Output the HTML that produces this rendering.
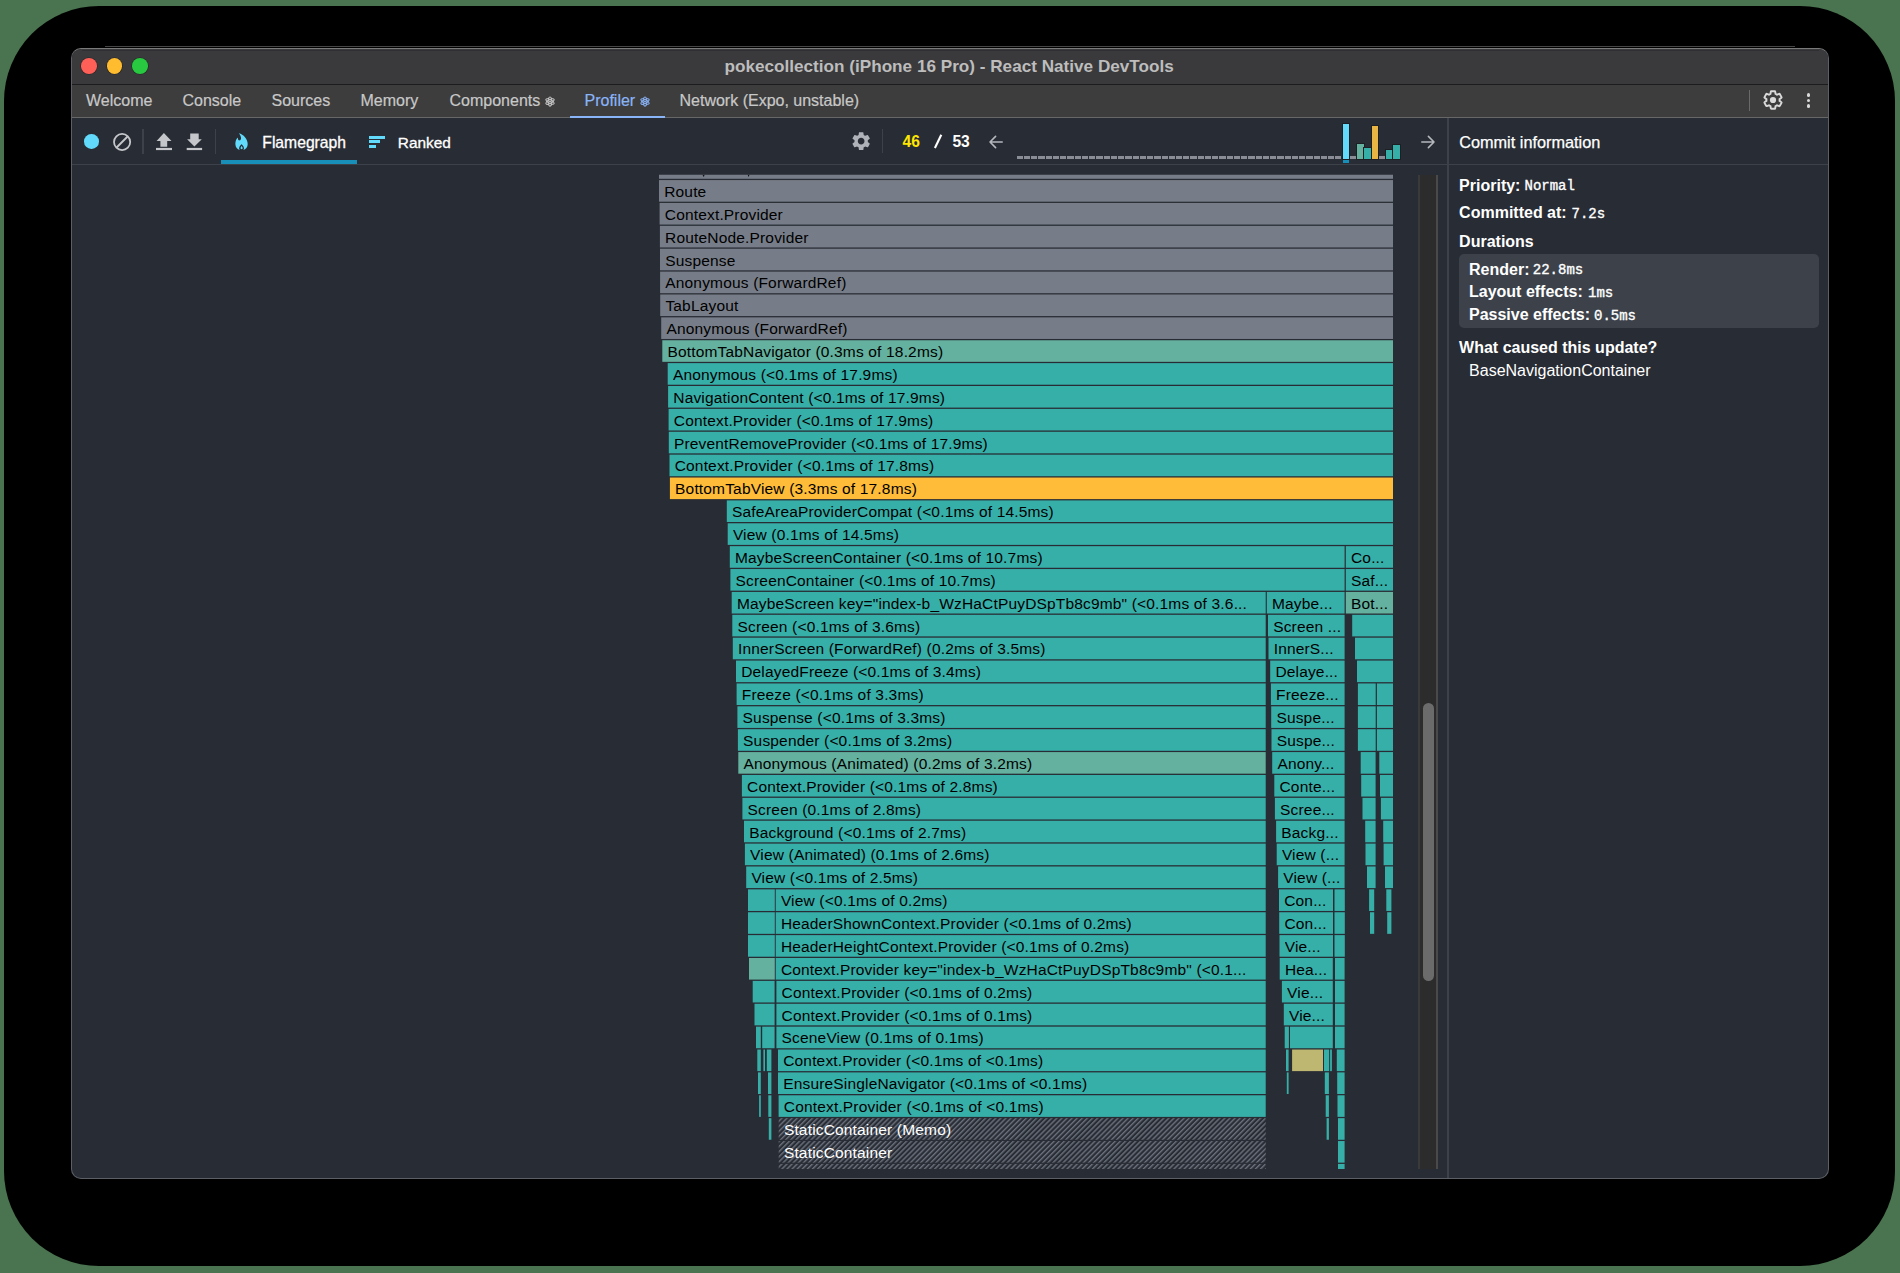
<!DOCTYPE html>
<html><head><meta charset="utf-8">
<style>
*{box-sizing:border-box;margin:0;padding:0}
html,body{width:1900px;height:1273px;overflow:hidden;background:#49744f;font-family:"Liberation Sans",sans-serif}
body{position:relative}
.a{position:absolute}
#shadow{position:absolute;left:4px;top:6px;width:1891px;height:1260px;border-radius:95px;background:#000}
#win{position:absolute;left:71px;top:48px;width:1758px;height:1131px;border-radius:10px;overflow:hidden;background:#282c34;border:1px solid #5c5f66;border-top-color:#7a7a7a}
.tl{position:absolute;top:58.2px;width:15.6px;height:15.6px;border-radius:50%;box-shadow:0 0 0 0.6px rgba(0,0,0,0.35)}
.t{position:absolute;white-space:nowrap;line-height:1}
.tab{position:absolute;top:92.8px;font-size:16px;color:#c8c8c8;white-space:nowrap;line-height:1;-webkit-text-stroke:0.2px currentColor}
.mono{font-family:"Liberation Mono",monospace}
#fg{position:absolute;left:0;top:0;width:1900px;height:1273px;clip-path:inset(174.7px 453px 104.1px 72px)}
.b{position:absolute;height:21.6px;overflow:hidden;color:#000;font-size:15.5px;letter-spacing:0.17px;line-height:21.6px;padding-left:5.2px;white-space:nowrap;padding-top:0.8px}
.b span{display:block;overflow:hidden}
.h{color:#fff}
</style></head><body>
<div id="shadow"></div>
<div id="win"></div>
<!-- title bar -->
<div class="a" style="left:72px;top:49px;width:1756px;height:35.5px;background:#3a3a3c;border-radius:9px 9px 0 0"></div>
<div class="a" style="left:105px;top:45.8px;width:1690px;height:1px;background:#454545"></div>
<div class="a" style="left:82px;top:50px;width:1737px;height:1px;background:#303034"></div>
<div class="a" style="left:72px;top:84px;width:1756px;height:1px;background:#1c1c1e"></div>
<div class="tl" style="left:81.4px;background:#fe5f57"></div>
<div class="tl" style="left:106.6px;background:#febc2e"></div>
<div class="tl" style="left:132.1px;background:#28c840"></div>
<div class="t" style="left:724.5px;top:57.6px;font-size:17.15px;font-weight:bold;color:#bdbdbd">pokecollection (iPhone 16 Pro) - React Native DevTools</div>
<!-- tabs -->
<div class="a" style="left:72px;top:85px;width:1756px;height:32.5px;background:#3d3d3d"></div>
<div class="a" style="left:72px;top:117px;width:1756px;height:1px;background:#676767"></div>
<div class="tab" style="left:86px">Welcome</div>
<div class="tab" style="left:182.5px">Console</div>
<div class="tab" style="left:271.5px">Sources</div>
<div class="tab" style="left:360.5px">Memory</div>
<div class="tab" style="left:449.5px">Components</div>
<div class="tab" style="left:584.5px;color:#8ab4f8">Profiler</div>
<div class="tab" style="left:679.5px">Network (Expo, unstable)</div>
<svg class="a" style="left:544.5px;top:95.6px" width="10" height="11" viewBox="0 0 10 11"><g fill="none" stroke="#c8c8c8" stroke-width="1.05"><ellipse cx="5" cy="5.5" rx="1.9" ry="4.6"/><ellipse cx="5" cy="5.5" rx="1.9" ry="4.6" transform="rotate(60 5 5.5)"/><ellipse cx="5" cy="5.5" rx="1.9" ry="4.6" transform="rotate(120 5 5.5)"/></g><circle cx="5" cy="5.5" r="1" fill="#c8c8c8"/></svg>
<svg class="a" style="left:640px;top:95.6px" width="10" height="11" viewBox="0 0 10 11"><g fill="none" stroke="#8ab4f8" stroke-width="1.05"><ellipse cx="5" cy="5.5" rx="1.9" ry="4.6"/><ellipse cx="5" cy="5.5" rx="1.9" ry="4.6" transform="rotate(60 5 5.5)"/><ellipse cx="5" cy="5.5" rx="1.9" ry="4.6" transform="rotate(120 5 5.5)"/></g><circle cx="5" cy="5.5" r="1" fill="#8ab4f8"/></svg>
<div class="a" style="left:1748.80px;top:90.30px;width:1.20px;height:20.30px;background:#6a6a6a;"></div>
<svg class="a" style="left:1761.7px;top:89.2px" width="22" height="22" viewBox="0 0 24 24"><path fill="none" stroke="#dadada" stroke-width="2.1" d="M19.14 12.94c.04-.3.06-.61.06-.94 0-.32-.02-.64-.07-.94l2.03-1.58a.49.49 0 0 0 .12-.61l-1.92-3.32a.488.488 0 0 0-.59-.22l-2.39.96c-.5-.38-1.030-.7-1.62-.94l-.36-2.54a.484.484 0 0 0-.48-.41h-3.840c-.24 0-.43.17-.47.41l-.36 2.54c-.59.24-1.13.57-1.62.94l-2.39-.96c-.22-.08-.47 0-.59.22L2.74 8.87c-.12.21-.08.47.12.61l2.03 1.58c-.05.3-.09.63-.09.94s.02.64.07.94l-2.03 1.58a.49.49 0 0 0-.12.61l1.92 3.32c.12.22.37.29.59.22l2.39-.96c.5.38 1.03.7 1.62.94l.36 2.54c.05.24.24.41.48.41h3.84c.24 0 .44-.17.47-.41l.36-2.54c.59-.24 1.13-.56 1.62-.94l2.39.96c.22.08.47 0 .59-.22l1.92-3.32c.12-.22.07-.47-.12-.61l-2.01-1.58z"/><circle cx="12" cy="12" r="3.4" fill="#dadada"/></svg>
<div class="a" style="left:1806.55px;top:92.85px;width:3.90px;height:3.90px;background:#dadada;border-radius:50%"></div>
<div class="a" style="left:1806.55px;top:98.55px;width:3.90px;height:3.90px;background:#dadada;border-radius:50%"></div>
<div class="a" style="left:1806.55px;top:104.15px;width:3.90px;height:3.90px;background:#dadada;border-radius:50%"></div>
<div class="a" style="left:569.5px;top:115.5px;width:95.5px;height:2px;background:#8ab4f8"></div>
<div class="a" style="left:84.20px;top:134.10px;width:14.60px;height:14.60px;background:#61dafb;border-radius:50%"></div>
<svg class="a" style="left:112px;top:131.5px" width="20" height="20" viewBox="0 0 20 20"><circle cx="10.1" cy="10" r="8.1" fill="none" stroke="#c4c6ca" stroke-width="1.8"/><line x1="4.6" y1="15.5" x2="15.6" y2="4.5" stroke="#c4c6ca" stroke-width="1.8"/></svg>
<div class="a" style="left:142.40px;top:129.00px;width:1.20px;height:25.00px;background:#3d424a;"></div>
<svg class="a" style="left:154px;top:130px" width="20" height="22" viewBox="0 0 20 22"><path d="M9.9 3.05 L17.5 10.9 L13.2 10.9 L13.2 16.8 L6.4 16.8 L6.4 10.9 L2.6 10.9 Z" fill="#c4c6ca"/><rect x="2" y="17.9" width="16" height="2.2" fill="#c4c6ca"/></svg>
<svg class="a" style="left:184px;top:130px" width="20" height="22" viewBox="0 0 20 22"><path d="M6.2 3.4 L14.7 3.4 L14.7 9.3 L17.8 9.3 L10.4 16.5 L3.1 9.3 L6.2 9.3 Z" fill="#c4c6ca"/><rect x="2.7" y="17.9" width="15.4" height="2.2" fill="#c4c6ca"/></svg>
<div class="a" style="left:214.90px;top:129.00px;width:1.20px;height:25.00px;background:#3d424a;"></div>
<svg class="a" style="left:230.9px;top:131.0px" width="21.1" height="21.1" viewBox="0 0 24 24"><path fill="#61dafb" d="M10.0650893,21.5040462 C7.14020814,20.6850349 5,18.0558698 5,14.9390244 C5,14.017627 5,9.81707317 7.83333333,7.37804878 C7.83333333,7.37804878 7.58333333,11.199187 10,10.6300813 C11.125,10.326087 13.0062497,7.63043487 8.91666667,2.5 C14.1666667,3.58536585 19,9.32926829 19,14.9390244 C19,18.0558698 16.8597919,20.6850349 13.9349107,21.5040462 C14.454663,21.0118505 14.7765152,20.3233394 14.7765152,19.5613412 C14.7765152,17.2826087 12,15.0875871 12,15.0875871 C12,15.0875871 9.22348485,17.2826087 9.22348485,19.5613412 C9.22348485,20.3233394 9.54533705,21.0118505 10.0650893,21.5040462 Z M12.0833333,20.6514763 C11.3814715,20.6514763 10.8125,20.1226027 10.8125,19.4702042 C10.8125,18.6069669 12.0833333,17.1347829 12.0833333,17.1347829 C12.0833333,17.1347829 13.3541667,18.6069669 13.3541667,19.4702042 C13.3541667,20.1226027 12.7851952,20.6514763 12.0833333,20.6514763 Z"/></svg>
<div class="t" style="left:262.3px;top:135.06px;font-size:15.7px;color:#fff;-webkit-text-stroke:0.3px #fff;">Flamegraph</div>
<div class="a" style="left:221.00px;top:160.00px;width:136.00px;height:4.00px;background:#178fb9;"></div>
<div class="a" style="left:368.80px;top:135.70px;width:16.00px;height:2.90px;background:#61dafb;"></div>
<div class="a" style="left:368.80px;top:140.40px;width:11.40px;height:2.90px;background:#61dafb;"></div>
<div class="a" style="left:368.80px;top:145.00px;width:7.20px;height:3.00px;background:#61dafb;"></div>
<div class="t" style="left:397.8px;top:135.31px;font-size:15.4px;color:#fff;-webkit-text-stroke:0.3px #fff;">Ranked</div>
<svg class="a" style="left:850.45px;top:130.05px" width="22.3" height="22.3" viewBox="0 0 24 24"><path fill="#afb3b9" fill-rule="evenodd" d="M19.14 12.94c.04-.3.06-.61.06-.94 0-.32-.02-.64-.07-.94l2.03-1.58a.49.49 0 0 0 .12-.61l-1.92-3.32a.488.488 0 0 0-.59-.22l-2.39.96c-.5-.38-1.03-.7-1.62-.94l-.36-2.54a.484.484 0 0 0-.48-.41h-3.84c-.24 0-.43.17-.47.41l-.36 2.54c-.59.24-1.13.57-1.62.94l-2.39-.96c-.22-.08-.47 0-.59.22L2.74 8.87c-.12.21-.08.47.12.61l2.03 1.58c-.05.3-.09.63-.09.94s.02.64.07.94l-2.03 1.58a.49.49 0 0 0-.12.61l1.92 3.32c.12.22.37.29.59.22l2.39-.96c.5.38 1.03.7 1.62.94l.36 2.54c.05.24.24.41.48.41h3.84c.24 0 .44-.17.47-.41l.36-2.54c.59-.24 1.13-.56 1.62-.94l2.39.96c.22.08.47 0 .59-.22l1.92-3.32c.12-.22.07-.47-.12-.61l-2.01-1.58zM12 15.6c-1.98 0-3.6-1.62-3.6-3.6s1.62-3.6 3.6-3.6 3.6 1.62 3.6 3.6-1.62 3.6-3.6 3.6z"/></svg>
<div class="a" style="left:882.20px;top:129.30px;width:1.20px;height:24.10px;background:#3d424a;"></div>
<div class="t" style="left:902.6px;top:133.94px;font-size:15.6px;color:#ffe600;font-weight:bold;">46</div>
<svg class="a" style="left:932px;top:132px" width="12" height="18" viewBox="0 0 12 18"><line x1="2.9" y1="16" x2="9.3" y2="2.8" stroke="#fff" stroke-width="2.1" stroke-linecap="butt"/></svg>
<div class="t" style="left:952.4px;top:133.94px;font-size:15.6px;color:#fff;font-weight:bold;">53</div>
<svg class="a" style="left:987px;top:133px" width="18" height="18" viewBox="0 0 18 18"><path d="M15.2 9 H3 M8.6 3.4 L3 9 L8.6 14.6" fill="none" stroke="#b4b7bc" stroke-width="1.6" stroke-linecap="round" stroke-linejoin="round"/></svg>
<svg class="a" style="left:1418.5px;top:132.7px" width="18" height="18" viewBox="0 0 18 18"><path d="M2.8 9 H15 M9.4 3.4 L15 9 L9.4 14.6" fill="none" stroke="#b4b7bc" stroke-width="1.6" stroke-linecap="round" stroke-linejoin="round"/></svg>
<div class="a" style="left:1017.00px;top:155.60px;width:6.00px;height:3.60px;background:#8a8d95;"></div>
<div class="a" style="left:1024.00px;top:155.60px;width:6.00px;height:3.60px;background:#8a8d95;"></div>
<div class="a" style="left:1031.00px;top:155.60px;width:6.00px;height:3.60px;background:#8a8d95;"></div>
<div class="a" style="left:1038.00px;top:155.60px;width:7.00px;height:3.60px;background:#8a8d95;"></div>
<div class="a" style="left:1046.00px;top:155.60px;width:6.00px;height:3.60px;background:#8a8d95;"></div>
<div class="a" style="left:1053.00px;top:155.60px;width:6.00px;height:3.60px;background:#8a8d95;"></div>
<div class="a" style="left:1060.00px;top:155.60px;width:6.00px;height:3.60px;background:#8a8d95;"></div>
<div class="a" style="left:1067.00px;top:155.60px;width:7.00px;height:3.60px;background:#8a8d95;"></div>
<div class="a" style="left:1075.00px;top:155.60px;width:6.00px;height:3.60px;background:#8a8d95;"></div>
<div class="a" style="left:1082.00px;top:155.60px;width:6.00px;height:3.60px;background:#8a8d95;"></div>
<div class="a" style="left:1089.00px;top:155.60px;width:6.00px;height:3.60px;background:#8a8d95;"></div>
<div class="a" style="left:1096.00px;top:155.60px;width:7.00px;height:3.60px;background:#8a8d95;"></div>
<div class="a" style="left:1104.00px;top:155.60px;width:6.00px;height:3.60px;background:#8a8d95;"></div>
<div class="a" style="left:1111.00px;top:155.60px;width:6.00px;height:3.60px;background:#8a8d95;"></div>
<div class="a" style="left:1118.00px;top:155.60px;width:6.00px;height:3.60px;background:#8a8d95;"></div>
<div class="a" style="left:1125.00px;top:155.60px;width:7.00px;height:3.60px;background:#8a8d95;"></div>
<div class="a" style="left:1133.00px;top:155.60px;width:6.00px;height:3.60px;background:#8a8d95;"></div>
<div class="a" style="left:1140.00px;top:155.60px;width:6.00px;height:3.60px;background:#8a8d95;"></div>
<div class="a" style="left:1147.00px;top:155.60px;width:6.00px;height:3.60px;background:#8a8d95;"></div>
<div class="a" style="left:1154.00px;top:155.60px;width:7.00px;height:3.60px;background:#8a8d95;"></div>
<div class="a" style="left:1162.00px;top:155.60px;width:6.00px;height:3.60px;background:#8a8d95;"></div>
<div class="a" style="left:1169.00px;top:155.60px;width:6.00px;height:3.60px;background:#8a8d95;"></div>
<div class="a" style="left:1176.00px;top:155.60px;width:6.00px;height:3.60px;background:#8a8d95;"></div>
<div class="a" style="left:1183.00px;top:155.60px;width:6.00px;height:3.60px;background:#8a8d95;"></div>
<div class="a" style="left:1190.00px;top:155.60px;width:7.00px;height:3.60px;background:#8a8d95;"></div>
<div class="a" style="left:1198.00px;top:155.60px;width:6.00px;height:3.60px;background:#8a8d95;"></div>
<div class="a" style="left:1205.00px;top:155.60px;width:6.00px;height:3.60px;background:#8a8d95;"></div>
<div class="a" style="left:1212.00px;top:155.60px;width:6.00px;height:3.60px;background:#8a8d95;"></div>
<div class="a" style="left:1219.00px;top:155.60px;width:7.00px;height:3.60px;background:#8a8d95;"></div>
<div class="a" style="left:1227.00px;top:155.60px;width:6.00px;height:3.60px;background:#8a8d95;"></div>
<div class="a" style="left:1234.00px;top:155.60px;width:6.00px;height:3.60px;background:#8a8d95;"></div>
<div class="a" style="left:1241.00px;top:155.60px;width:6.00px;height:3.60px;background:#8a8d95;"></div>
<div class="a" style="left:1248.00px;top:155.60px;width:7.00px;height:3.60px;background:#8a8d95;"></div>
<div class="a" style="left:1256.00px;top:155.60px;width:6.00px;height:3.60px;background:#8a8d95;"></div>
<div class="a" style="left:1263.00px;top:155.60px;width:6.00px;height:3.60px;background:#8a8d95;"></div>
<div class="a" style="left:1270.00px;top:155.60px;width:6.00px;height:3.60px;background:#8a8d95;"></div>
<div class="a" style="left:1277.00px;top:155.60px;width:7.00px;height:3.60px;background:#8a8d95;"></div>
<div class="a" style="left:1285.00px;top:155.60px;width:6.00px;height:3.60px;background:#8a8d95;"></div>
<div class="a" style="left:1292.00px;top:155.60px;width:6.00px;height:3.60px;background:#8a8d95;"></div>
<div class="a" style="left:1299.00px;top:155.60px;width:6.00px;height:3.60px;background:#8a8d95;"></div>
<div class="a" style="left:1306.00px;top:155.60px;width:7.00px;height:3.60px;background:#8a8d95;"></div>
<div class="a" style="left:1314.00px;top:155.60px;width:6.00px;height:3.60px;background:#8a8d95;"></div>
<div class="a" style="left:1321.00px;top:155.60px;width:6.00px;height:3.60px;background:#8a8d95;"></div>
<div class="a" style="left:1328.00px;top:155.60px;width:6.00px;height:3.60px;background:#8a8d95;"></div>
<div class="a" style="left:1335.00px;top:155.60px;width:6.00px;height:3.60px;background:#8a8d95;"></div>
<div class="a" style="left:1342.00px;top:155.60px;width:7.00px;height:3.60px;background:#8a8d95;"></div>
<div class="a" style="left:1350.00px;top:155.60px;width:6.00px;height:3.60px;background:#8a8d95;"></div>
<div class="a" style="left:1357.00px;top:155.60px;width:6.00px;height:3.60px;background:#8a8d95;"></div>
<div class="a" style="left:1364.00px;top:155.60px;width:6.00px;height:3.60px;background:#8a8d95;"></div>
<div class="a" style="left:1371.00px;top:155.60px;width:7.00px;height:3.60px;background:#8a8d95;"></div>
<div class="a" style="left:1379.00px;top:155.60px;width:6.00px;height:3.60px;background:#8a8d95;"></div>
<div class="a" style="left:1386.00px;top:155.60px;width:6.00px;height:3.60px;background:#8a8d95;"></div>
<div class="a" style="left:1393.00px;top:155.60px;width:6.00px;height:3.60px;background:#8a8d95;"></div>
<div class="a" style="left:1342.70px;top:123.60px;width:6.54px;height:35.30px;background:#61dafb;outline:0.7px solid #1d1f25"></div>
<div class="a" style="left:1342.70px;top:159.80px;width:6.54px;height:3.70px;background:#178fb9;"></div>
<div class="a" style="left:1357.18px;top:144.00px;width:6.54px;height:15.00px;background:#63b19e;outline:0.7px solid #1d1f25"></div>
<div class="a" style="left:1364.42px;top:147.60px;width:6.54px;height:11.40px;background:#37afa9;outline:0.7px solid #1d1f25"></div>
<div class="a" style="left:1371.66px;top:125.70px;width:6.54px;height:33.30px;background:#e8b443;outline:0.7px solid #1d1f25"></div>
<div class="a" style="left:1386.14px;top:150.30px;width:6.54px;height:8.70px;background:#37afa9;outline:0.7px solid #1d1f25"></div>
<div class="a" style="left:1393.38px;top:144.50px;width:6.54px;height:14.50px;background:#37afa9;outline:0.7px solid #1d1f25"></div>
<div class="a" style="left:72px;top:164px;width:1756px;height:1px;background:#3d424a"></div>
<div class="a" style="left:1447.1px;top:118px;width:1.9px;height:1060px;background:#3d424a"></div>
<div class="t" style="left:1459.2px;top:134.05px;font-size:16.3px;color:#fff;-webkit-text-stroke:0.25px #fff;">Commit information</div>
<div class="t" style="left:1459.1px;top:177.60px;font-size:16px;color:#fff;font-weight:bold;">Priority:</div>
<div class="t" style="left:1524.5px;top:179.36px;font-size:14px;color:#fff;font-family:'Liberation Mono',monospace;-webkit-text-stroke:0.35px currentColor;">Normal</div>
<div class="t" style="left:1459.1px;top:205.40px;font-size:16px;color:#fff;font-weight:bold;">Committed at:</div>
<div class="t" style="left:1571.5px;top:207.16px;font-size:14px;color:#fff;font-family:'Liberation Mono',monospace;-webkit-text-stroke:0.35px currentColor;">7.2s</div>
<div class="t" style="left:1459.1px;top:233.60px;font-size:16px;color:#fff;font-weight:bold;">Durations</div>
<div class="a" style="left:1459.00px;top:254.00px;width:359.70px;height:73.70px;background:#3d424a;border-radius:5px"></div>
<div class="t" style="left:1469.0px;top:261.60px;font-size:16px;color:#fff;font-weight:bold;">Render:</div>
<div class="t" style="left:1532.8px;top:263.36px;font-size:14px;color:#fff;font-family:'Liberation Mono',monospace;-webkit-text-stroke:0.35px currentColor;">22.8ms</div>
<div class="t" style="left:1469.0px;top:284.30px;font-size:16px;color:#fff;font-weight:bold;">Layout effects:</div>
<div class="t" style="left:1588.0px;top:286.06px;font-size:14px;color:#fff;font-family:'Liberation Mono',monospace;-webkit-text-stroke:0.35px currentColor;">1ms</div>
<div class="t" style="left:1469.0px;top:307.20px;font-size:16px;color:#fff;font-weight:bold;">Passive effects:</div>
<div class="t" style="left:1594.0px;top:308.96px;font-size:14px;color:#fff;font-family:'Liberation Mono',monospace;-webkit-text-stroke:0.35px currentColor;">0.5ms</div>
<div class="t" style="left:1459.1px;top:340.40px;font-size:16px;color:#fff;font-weight:bold;">What caused this update?</div>
<div class="t" style="left:1469.1px;top:362.60px;font-size:16px;color:#fff;">BaseNavigationContainer</div>
<div class="a" style="left:1417.90px;top:174.80px;width:20.10px;height:994.10px;background:#2c2c2c;"></div>
<div class="a" style="left:1417.90px;top:174.80px;width:2.20px;height:994.10px;background:#3a3a3a;"></div>
<div class="a" style="left:1436.10px;top:174.80px;width:1.90px;height:994.10px;background:#4a4a4a;"></div>
<div class="a" style="left:1423.00px;top:703.40px;width:11.00px;height:278.10px;background:#6b6b6b;border-radius:5.5px"></div>
<div id="fg">
<svg class="a" style="left:0;top:0" width="1900" height="1273"><defs><pattern id="hp" patternUnits="userSpaceOnUse" width="3.6" height="3.6" patternTransform="rotate(45)"><rect width="3.6" height="3.6" fill="#282c34"/><rect x="0" y="0" width="1.4" height="3.6" fill="#6c727d"/></pattern></defs><rect x="659.00" y="157.20" width="734.00" height="21.6" fill="#777d88"/><rect x="659.00" y="180.08" width="734.00" height="21.6" fill="#777d88"/><rect x="659.60" y="202.96" width="733.40" height="21.6" fill="#777d88"/><rect x="659.90" y="225.84" width="733.10" height="21.6" fill="#777d88"/><rect x="660.00" y="248.72" width="733.00" height="21.6" fill="#777d88"/><rect x="660.10" y="271.60" width="732.90" height="21.6" fill="#777d88"/><rect x="660.20" y="294.48" width="732.80" height="21.6" fill="#777d88"/><rect x="661.20" y="317.36" width="731.80" height="21.6" fill="#777d88"/><rect x="662.30" y="340.24" width="730.70" height="21.6" fill="#63b19e"/><rect x="667.70" y="363.12" width="725.30" height="21.6" fill="#37afa9"/><rect x="668.10" y="386.00" width="724.90" height="21.6" fill="#37afa9"/><rect x="668.60" y="408.88" width="724.40" height="21.6" fill="#37afa9"/><rect x="668.80" y="431.76" width="724.20" height="21.6" fill="#37afa9"/><rect x="669.50" y="454.64" width="723.50" height="21.6" fill="#37afa9"/><rect x="669.90" y="477.52" width="723.10" height="21.6" fill="#febc38"/><rect x="726.80" y="500.40" width="666.20" height="21.6" fill="#37afa9"/><rect x="727.70" y="523.28" width="665.30" height="21.6" fill="#37afa9"/><rect x="729.80" y="546.16" width="614.80" height="21.6" fill="#37afa9"/><rect x="1345.80" y="546.16" width="47.20" height="21.6" fill="#37afa9"/><rect x="730.40" y="569.04" width="614.20" height="21.6" fill="#37afa9"/><rect x="1345.80" y="569.04" width="47.20" height="21.6" fill="#37afa9"/><rect x="731.70" y="591.92" width="534.00" height="21.6" fill="#37afa9"/><rect x="1266.80" y="591.92" width="77.80" height="21.6" fill="#37afa9"/><rect x="1345.80" y="591.92" width="47.20" height="21.6" fill="#63b19e"/><rect x="732.30" y="614.80" width="533.40" height="21.6" fill="#37afa9"/><rect x="1268.00" y="614.80" width="76.60" height="21.6" fill="#37afa9"/><rect x="1352.20" y="614.80" width="40.80" height="21.6" fill="#37afa9"/><rect x="732.80" y="637.68" width="532.90" height="21.6" fill="#37afa9"/><rect x="1268.50" y="637.68" width="76.10" height="21.6" fill="#37afa9"/><rect x="1355.00" y="637.68" width="38.00" height="21.6" fill="#37afa9"/><rect x="736.00" y="660.56" width="529.70" height="21.6" fill="#37afa9"/><rect x="1270.20" y="660.56" width="74.40" height="21.6" fill="#37afa9"/><rect x="1357.00" y="660.56" width="36.00" height="21.6" fill="#37afa9"/><rect x="736.60" y="683.44" width="529.10" height="21.6" fill="#37afa9"/><rect x="1270.90" y="683.44" width="73.70" height="21.6" fill="#37afa9"/><rect x="1357.90" y="683.44" width="17.80" height="21.6" fill="#37afa9"/><rect x="1376.90" y="683.44" width="16.10" height="21.6" fill="#37afa9"/><rect x="737.40" y="706.32" width="528.30" height="21.6" fill="#37afa9"/><rect x="1271.20" y="706.32" width="73.40" height="21.6" fill="#37afa9"/><rect x="1357.90" y="706.32" width="17.80" height="21.6" fill="#37afa9"/><rect x="1376.90" y="706.32" width="16.10" height="21.6" fill="#37afa9"/><rect x="737.90" y="729.20" width="527.80" height="21.6" fill="#37afa9"/><rect x="1271.50" y="729.20" width="73.10" height="21.6" fill="#37afa9"/><rect x="1357.90" y="729.20" width="17.80" height="21.6" fill="#37afa9"/><rect x="1376.90" y="729.20" width="16.10" height="21.6" fill="#37afa9"/><rect x="738.30" y="752.08" width="527.40" height="21.6" fill="#63b19e"/><rect x="1272.20" y="752.08" width="72.40" height="21.6" fill="#37afa9"/><rect x="1360.70" y="752.08" width="14.90" height="21.6" fill="#37afa9"/><rect x="1379.30" y="752.08" width="13.70" height="21.6" fill="#37afa9"/><rect x="741.90" y="774.96" width="523.80" height="21.6" fill="#37afa9"/><rect x="1274.30" y="774.96" width="70.30" height="21.6" fill="#37afa9"/><rect x="1361.20" y="774.96" width="14.40" height="21.6" fill="#37afa9"/><rect x="1380.00" y="774.96" width="13.00" height="21.6" fill="#37afa9"/><rect x="742.40" y="797.84" width="523.30" height="21.6" fill="#37afa9"/><rect x="1274.90" y="797.84" width="69.70" height="21.6" fill="#37afa9"/><rect x="1362.50" y="797.84" width="13.10" height="21.6" fill="#37afa9"/><rect x="1380.90" y="797.84" width="12.10" height="21.6" fill="#37afa9"/><rect x="744.00" y="820.72" width="521.70" height="21.6" fill="#37afa9"/><rect x="1276.10" y="820.72" width="68.50" height="21.6" fill="#37afa9"/><rect x="1365.20" y="820.72" width="10.40" height="21.6" fill="#37afa9"/><rect x="1383.20" y="820.72" width="9.80" height="21.6" fill="#37afa9"/><rect x="744.90" y="843.60" width="520.80" height="21.6" fill="#37afa9"/><rect x="1276.70" y="843.60" width="67.90" height="21.6" fill="#37afa9"/><rect x="1365.50" y="843.60" width="10.10" height="21.6" fill="#37afa9"/><rect x="1383.60" y="843.60" width="9.40" height="21.6" fill="#37afa9"/><rect x="746.20" y="866.48" width="519.50" height="21.6" fill="#37afa9"/><rect x="1278.10" y="866.48" width="66.50" height="21.6" fill="#37afa9"/><rect x="1367.00" y="866.48" width="8.60" height="21.6" fill="#37afa9"/><rect x="1385.00" y="866.48" width="8.00" height="21.6" fill="#37afa9"/><rect x="1369.10" y="889.36" width="5.10" height="21.6" fill="#37afa9"/><rect x="1386.30" y="889.36" width="5.10" height="21.6" fill="#37afa9"/><rect x="748.00" y="889.36" width="26.80" height="21.6" fill="#37afa9"/><rect x="775.70" y="889.36" width="490.00" height="21.6" fill="#37afa9"/><rect x="1279.00" y="889.36" width="54.00" height="21.6" fill="#37afa9"/><rect x="1334.50" y="889.36" width="10.30" height="21.6" fill="#37afa9"/><rect x="1370.00" y="912.24" width="4.20" height="21.6" fill="#37afa9"/><rect x="1387.20" y="912.24" width="4.20" height="21.6" fill="#37afa9"/><rect x="748.00" y="912.24" width="26.80" height="21.6" fill="#37afa9"/><rect x="775.70" y="912.24" width="490.00" height="21.6" fill="#37afa9"/><rect x="1279.20" y="912.24" width="53.80" height="21.6" fill="#37afa9"/><rect x="1334.50" y="912.24" width="10.30" height="21.6" fill="#37afa9"/><rect x="748.00" y="935.12" width="26.80" height="21.6" fill="#37afa9"/><rect x="775.70" y="935.12" width="490.00" height="21.6" fill="#37afa9"/><rect x="1279.50" y="935.12" width="53.50" height="21.6" fill="#37afa9"/><rect x="1334.50" y="935.12" width="10.30" height="21.6" fill="#37afa9"/><rect x="749.00" y="958.00" width="25.80" height="21.6" fill="#63b19e"/><rect x="775.70" y="958.00" width="490.00" height="21.6" fill="#37afa9"/><rect x="1279.70" y="958.00" width="53.10" height="21.6" fill="#37afa9"/><rect x="1335.00" y="958.00" width="9.60" height="21.6" fill="#37afa9"/><rect x="752.70" y="980.88" width="21.90" height="21.6" fill="#37afa9"/><rect x="776.40" y="980.88" width="489.30" height="21.6" fill="#37afa9"/><rect x="1281.90" y="980.88" width="50.90" height="21.6" fill="#37afa9"/><rect x="1335.00" y="980.88" width="9.60" height="21.6" fill="#37afa9"/><rect x="754.50" y="1003.76" width="20.10" height="21.6" fill="#37afa9"/><rect x="776.40" y="1003.76" width="489.30" height="21.6" fill="#37afa9"/><rect x="1283.80" y="1003.76" width="49.00" height="21.6" fill="#37afa9"/><rect x="1335.00" y="1003.76" width="9.60" height="21.6" fill="#37afa9"/><rect x="756.00" y="1026.64" width="4.80" height="21.6" fill="#37afa9"/><rect x="762.20" y="1026.64" width="12.40" height="21.6" fill="#37afa9"/><rect x="776.40" y="1026.64" width="489.30" height="21.6" fill="#37afa9"/><rect x="1284.70" y="1026.64" width="4.20" height="21.6" fill="#37afa9"/><rect x="1290.00" y="1026.64" width="42.80" height="21.6" fill="#37afa9"/><rect x="1335.00" y="1026.64" width="9.60" height="21.6" fill="#37afa9"/><rect x="757.30" y="1049.52" width="3.50" height="21.6" fill="#37afa9"/><rect x="763.40" y="1049.52" width="1.60" height="21.6" fill="#37afa9"/><rect x="766.80" y="1049.52" width="4.60" height="21.6" fill="#37afa9"/><rect x="778.00" y="1049.52" width="487.70" height="21.6" fill="#37afa9"/><rect x="1286.00" y="1049.52" width="2.60" height="21.6" fill="#37afa9"/><rect x="1292.10" y="1049.52" width="30.90" height="21.6" fill="#beb771"/><rect x="1324.00" y="1049.52" width="5.20" height="21.6" fill="#37afa9"/><rect x="1330.10" y="1049.52" width="1.80" height="21.6" fill="#37afa9"/><rect x="1336.80" y="1049.52" width="7.80" height="21.6" fill="#37afa9"/><rect x="758.00" y="1072.40" width="2.80" height="21.6" fill="#37afa9"/><rect x="768.00" y="1072.40" width="3.40" height="21.6" fill="#37afa9"/><rect x="778.00" y="1072.40" width="487.70" height="21.6" fill="#37afa9"/><rect x="1286.80" y="1072.40" width="1.80" height="21.6" fill="#37afa9"/><rect x="1324.80" y="1072.40" width="4.10" height="21.6" fill="#37afa9"/><rect x="1337.20" y="1072.40" width="7.40" height="21.6" fill="#37afa9"/><rect x="759.10" y="1095.28" width="1.70" height="21.6" fill="#37afa9"/><rect x="768.30" y="1095.28" width="3.10" height="21.6" fill="#37afa9"/><rect x="778.60" y="1095.28" width="487.10" height="21.6" fill="#37afa9"/><rect x="1325.70" y="1095.28" width="3.20" height="21.6" fill="#37afa9"/><rect x="1337.50" y="1095.28" width="7.10" height="21.6" fill="#37afa9"/><rect x="768.80" y="1118.16" width="2.60" height="21.6" fill="#37afa9"/><rect x="778.70" y="1118.16" width="487.00" height="21.6" fill="url(#hp)"/><rect x="1326.60" y="1118.16" width="2.30" height="21.6" fill="#37afa9"/><rect x="1338.00" y="1118.16" width="6.60" height="21.6" fill="#37afa9"/><rect x="778.70" y="1141.04" width="487.00" height="21.6" fill="url(#hp)"/><rect x="1338.00" y="1141.04" width="6.60" height="21.6" fill="#37afa9"/><rect x="778.70" y="1163.92" width="487.00" height="21.6" fill="url(#hp)"/><rect x="1338.00" y="1163.92" width="6.60" height="21.6" fill="#37afa9"/><path d="M702.3 174.6 L704.6 174.6 L703.9 177.2 Z" fill="#111"/><path d="M747.6 174.6 L749.6 174.6 L748.6 177.0 Z" fill="#111"/></svg>
<div class="b" style="left:659.00px;top:180.08px;width:734.00px;"><span>Route</span></div>
<div class="b" style="left:659.60px;top:202.96px;width:733.40px;"><span>Context.Provider</span></div>
<div class="b" style="left:659.90px;top:225.84px;width:733.10px;"><span>RouteNode.Provider</span></div>
<div class="b" style="left:660.00px;top:248.72px;width:733.00px;"><span>Suspense</span></div>
<div class="b" style="left:660.10px;top:271.60px;width:732.90px;"><span>Anonymous (ForwardRef)</span></div>
<div class="b" style="left:660.20px;top:294.48px;width:732.80px;"><span>TabLayout</span></div>
<div class="b" style="left:661.20px;top:317.36px;width:731.80px;"><span>Anonymous (ForwardRef)</span></div>
<div class="b" style="left:662.30px;top:340.24px;width:730.70px;"><span>BottomTabNavigator (0.3ms of 18.2ms)</span></div>
<div class="b" style="left:667.70px;top:363.12px;width:725.30px;"><span>Anonymous (&lt;0.1ms of 17.9ms)</span></div>
<div class="b" style="left:668.10px;top:386.00px;width:724.90px;"><span>NavigationContent (&lt;0.1ms of 17.9ms)</span></div>
<div class="b" style="left:668.60px;top:408.88px;width:724.40px;"><span>Context.Provider (&lt;0.1ms of 17.9ms)</span></div>
<div class="b" style="left:668.80px;top:431.76px;width:724.20px;"><span>PreventRemoveProvider (&lt;0.1ms of 17.9ms)</span></div>
<div class="b" style="left:669.50px;top:454.64px;width:723.50px;"><span>Context.Provider (&lt;0.1ms of 17.8ms)</span></div>
<div class="b" style="left:669.90px;top:477.52px;width:723.10px;"><span>BottomTabView (3.3ms of 17.8ms)</span></div>
<div class="b" style="left:726.80px;top:500.40px;width:666.20px;"><span>SafeAreaProviderCompat (&lt;0.1ms of 14.5ms)</span></div>
<div class="b" style="left:727.70px;top:523.28px;width:665.30px;"><span>View (0.1ms of 14.5ms)</span></div>
<div class="b" style="left:729.80px;top:546.16px;width:614.80px;"><span>MaybeScreenContainer (&lt;0.1ms of 10.7ms)</span></div>
<div class="b" style="left:1345.80px;top:546.16px;width:47.20px;"><span>Co...</span></div>
<div class="b" style="left:730.40px;top:569.04px;width:614.20px;"><span>ScreenContainer (&lt;0.1ms of 10.7ms)</span></div>
<div class="b" style="left:1345.80px;top:569.04px;width:47.20px;"><span>Saf...</span></div>
<div class="b" style="left:731.70px;top:591.92px;width:534.00px;"><span>MaybeScreen key="index-b_WzHaCtPuyDSpTb8c9mb" (&lt;0.1ms of 3.6...</span></div>
<div class="b" style="left:1266.80px;top:591.92px;width:77.80px;"><span>Maybe...</span></div>
<div class="b" style="left:1345.80px;top:591.92px;width:47.20px;"><span>Bot...</span></div>
<div class="b" style="left:732.30px;top:614.80px;width:533.40px;"><span>Screen (&lt;0.1ms of 3.6ms)</span></div>
<div class="b" style="left:1268.00px;top:614.80px;width:76.60px;"><span>Screen ...</span></div>
<div class="b" style="left:732.80px;top:637.68px;width:532.90px;"><span>InnerScreen (ForwardRef) (0.2ms of 3.5ms)</span></div>
<div class="b" style="left:1268.50px;top:637.68px;width:76.10px;"><span>InnerS...</span></div>
<div class="b" style="left:736.00px;top:660.56px;width:529.70px;"><span>DelayedFreeze (&lt;0.1ms of 3.4ms)</span></div>
<div class="b" style="left:1270.20px;top:660.56px;width:74.40px;"><span>Delaye...</span></div>
<div class="b" style="left:736.60px;top:683.44px;width:529.10px;"><span>Freeze (&lt;0.1ms of 3.3ms)</span></div>
<div class="b" style="left:1270.90px;top:683.44px;width:73.70px;"><span>Freeze...</span></div>
<div class="b" style="left:737.40px;top:706.32px;width:528.30px;"><span>Suspense (&lt;0.1ms of 3.3ms)</span></div>
<div class="b" style="left:1271.20px;top:706.32px;width:73.40px;"><span>Suspe...</span></div>
<div class="b" style="left:737.90px;top:729.20px;width:527.80px;"><span>Suspender (&lt;0.1ms of 3.2ms)</span></div>
<div class="b" style="left:1271.50px;top:729.20px;width:73.10px;"><span>Suspe...</span></div>
<div class="b" style="left:738.30px;top:752.08px;width:527.40px;"><span>Anonymous (Animated) (0.2ms of 3.2ms)</span></div>
<div class="b" style="left:1272.20px;top:752.08px;width:72.40px;"><span>Anony...</span></div>
<div class="b" style="left:741.90px;top:774.96px;width:523.80px;"><span>Context.Provider (&lt;0.1ms of 2.8ms)</span></div>
<div class="b" style="left:1274.30px;top:774.96px;width:70.30px;"><span>Conte...</span></div>
<div class="b" style="left:742.40px;top:797.84px;width:523.30px;"><span>Screen (0.1ms of 2.8ms)</span></div>
<div class="b" style="left:1274.90px;top:797.84px;width:69.70px;"><span>Scree...</span></div>
<div class="b" style="left:744.00px;top:820.72px;width:521.70px;"><span>Background (&lt;0.1ms of 2.7ms)</span></div>
<div class="b" style="left:1276.10px;top:820.72px;width:68.50px;"><span>Backg...</span></div>
<div class="b" style="left:744.90px;top:843.60px;width:520.80px;"><span>View (Animated) (0.1ms of 2.6ms)</span></div>
<div class="b" style="left:1276.70px;top:843.60px;width:67.90px;"><span>View (...</span></div>
<div class="b" style="left:746.20px;top:866.48px;width:519.50px;"><span>View (&lt;0.1ms of 2.5ms)</span></div>
<div class="b" style="left:1278.10px;top:866.48px;width:66.50px;"><span>View (...</span></div>
<div class="b" style="left:775.70px;top:889.36px;width:490.00px;"><span>View (&lt;0.1ms of 0.2ms)</span></div>
<div class="b" style="left:1279.00px;top:889.36px;width:54.00px;"><span>Con...</span></div>
<div class="b" style="left:775.70px;top:912.24px;width:490.00px;"><span>HeaderShownContext.Provider (&lt;0.1ms of 0.2ms)</span></div>
<div class="b" style="left:1279.20px;top:912.24px;width:53.80px;"><span>Con...</span></div>
<div class="b" style="left:775.70px;top:935.12px;width:490.00px;"><span>HeaderHeightContext.Provider (&lt;0.1ms of 0.2ms)</span></div>
<div class="b" style="left:1279.50px;top:935.12px;width:53.50px;"><span>Vie...</span></div>
<div class="b" style="left:775.70px;top:958.00px;width:490.00px;"><span>Context.Provider key="index-b_WzHaCtPuyDSpTb8c9mb" (&lt;0.1...</span></div>
<div class="b" style="left:1279.70px;top:958.00px;width:53.10px;"><span>Hea...</span></div>
<div class="b" style="left:776.40px;top:980.88px;width:489.30px;"><span>Context.Provider (&lt;0.1ms of 0.2ms)</span></div>
<div class="b" style="left:1281.90px;top:980.88px;width:50.90px;"><span>Vie...</span></div>
<div class="b" style="left:776.40px;top:1003.76px;width:489.30px;"><span>Context.Provider (&lt;0.1ms of 0.1ms)</span></div>
<div class="b" style="left:1283.80px;top:1003.76px;width:49.00px;"><span>Vie...</span></div>
<div class="b" style="left:776.40px;top:1026.64px;width:489.30px;"><span>SceneView (0.1ms of 0.1ms)</span></div>
<div class="b" style="left:778.00px;top:1049.52px;width:487.70px;"><span>Context.Provider (&lt;0.1ms of &lt;0.1ms)</span></div>
<div class="b" style="left:778.00px;top:1072.40px;width:487.70px;"><span>EnsureSingleNavigator (&lt;0.1ms of &lt;0.1ms)</span></div>
<div class="b" style="left:778.60px;top:1095.28px;width:487.10px;"><span>Context.Provider (&lt;0.1ms of &lt;0.1ms)</span></div>
<div class="b h" style="left:778.70px;top:1118.16px;width:487.00px;"><span>StaticContainer (Memo)</span></div>
<div class="b h" style="left:778.70px;top:1141.04px;width:487.00px;"><span>StaticContainer</span></div>
</div>
</body></html>
